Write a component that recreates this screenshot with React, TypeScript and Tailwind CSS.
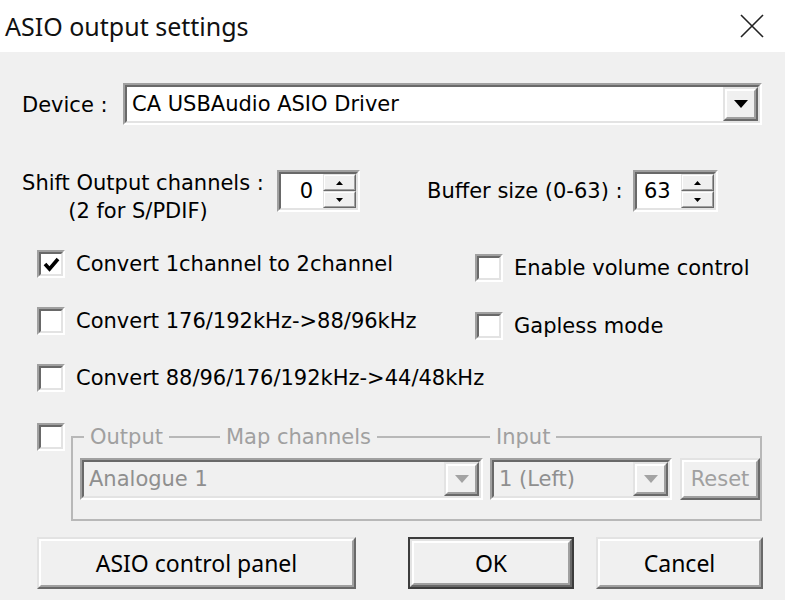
import type { ReactNode } from "react";

// classic win32 3d edges, scaled 2x
const sunkenOuter = "border-2 border-t-[#a0a0a0] border-l-[#a0a0a0] border-r-white border-b-white";
const sunkenInner = "border-2 border-t-[#696969] border-l-[#696969] border-r-[#e3e3e3] border-b-[#e3e3e3]";
const raisedOuter = "border-2 border-t-[#e3e3e3] border-l-[#e3e3e3] border-r-[#696969] border-b-[#696969]";
const raisedInner = "border-2 border-t-white border-l-white border-r-[#a0a0a0] border-b-[#a0a0a0]";

function Arrow({ disabled }: { disabled?: boolean }) {
  return (
    <svg width="14" height="8" viewBox="0 0 14 8">
      <polygon points="0,0 14,0 7,8" fill={disabled ? "#a3a3a3" : "#000"} />
    </svg>
  );
}

function DropButton({ disabled }: { disabled?: boolean }) {
  return (
    <div className={`${raisedOuter} w-[35px] h-full bg-[#f0f0f0]`}>
      <div className={`${raisedInner} h-full flex items-center justify-center`}>
        <Arrow disabled={disabled} />
      </div>
    </div>
  );
}

function Combo({ value, width, disabled }: { value: string; width: string; disabled?: boolean }) {
  return (
    <div className={`${sunkenOuter} ${width} h-[42px]`}>
      <div className={`${sunkenInner} h-full flex ${disabled ? "bg-[#f0f0f0]" : "bg-white"}`}>
        <div className={`flex-1 flex items-center pl-[5px] ${disabled ? "text-[#8f8f8f]" : "text-black"}`}>
          {value}
        </div>
        <DropButton disabled={disabled} />
      </div>
    </div>
  );
}

function SpinHalf({ up }: { up?: boolean }) {
  return (
    <div className="flex-1 border border-t-[#e3e3e3] border-l-[#e3e3e3] border-r-[#696969] border-b-[#696969] bg-[#f0f0f0]">
      <div className="h-full border border-t-white border-l-white border-r-[#a0a0a0] border-b-[#a0a0a0] flex items-center justify-center">
        <svg width="7" height="4" viewBox="0 0 7 4">
          <polygon points={up ? "0,4 7,4 3.5,0" : "0,0 7,0 3.5,4"} fill="#000" />
        </svg>
      </div>
    </div>
  );
}

function Spin({ value, width }: { value: string; width: string }) {
  return (
    <div className={`${sunkenOuter} ${width} h-[42px]`}>
      <div className={`${sunkenInner} h-full flex bg-white`}>
        <div className="flex-1 flex items-center justify-end pr-[10px]">{value}</div>
        <div className="w-[33px] flex flex-col">
          <SpinHalf up />
          <SpinHalf />
        </div>
      </div>
    </div>
  );
}

function CheckBox({ checked }: { checked?: boolean }) {
  return (
    <div className={`${sunkenOuter} w-[28px] h-[28px] shrink-0`}>
      <div className={`${sunkenInner} h-full bg-white flex items-center justify-center`}>
        {checked && (
          <svg width="17" height="15" viewBox="0 0 17 15">
            <polyline points="2,7 6.5,12 15,2" fill="none" stroke="#000" strokeWidth="3.6" />
          </svg>
        )}
      </div>
    </div>
  );
}

function Check({ label, checked }: { label: string; checked?: boolean }) {
  return (
    <div className="flex items-center gap-[11px] h-[28px]">
      <CheckBox checked={checked} />
      <span className="whitespace-nowrap">{label}</span>
    </div>
  );
}

function Button({ children, width, isDefault, disabled, height }: {
  children: ReactNode;
  width: string;
  height: string;
  isDefault?: boolean;
  disabled?: boolean;
}) {
  return (
    <div className={`${width} ${height} ${isDefault ? "border-2 border-[#3c3c3c]" : ""}`}>
      <div className={`${raisedOuter} h-full bg-[#f0f0f0]`}>
        <div className={`${raisedInner} h-full flex items-center justify-center ${disabled ? "text-[#a0a0a0]" : "text-black"}`}>
          {children}
        </div>
      </div>
    </div>
  );
}

export default function App() {
  return (
    <div className="w-[785px] h-[600px] overflow-hidden bg-[#f0f0f0] text-black text-[21px] leading-none font-['DejaVu_Sans',sans-serif]">
      <div className="h-[52px] bg-white flex items-center justify-between pl-[5px] pr-[21px] font-['Noto_Sans',sans-serif]">
        <span className="text-[25px] text-[#111]">ASIO output settings</span>
        <svg width="24" height="24" viewBox="0 0 24 24">
          <path d="M1 1 L23 23 M23 1 L1 23" stroke="#222" strokeWidth="1.6" />
        </svg>
      </div>

      <div className="mt-[31px] flex items-center justify-between pl-[22px] pr-[23px]">
        <span className="mt-[3px]">Device :</span>
        <Combo value="CA USBAudio ASIO Driver" width="w-[639px]" />
      </div>

      <div className="mt-[44px] flex items-start pl-[18px]">
        <div className="w-[250px] text-center leading-[28px]">
          <div>Shift Output channels :</div>
          <div className="pr-[10px]">(2 for S/PDIF)</div>
        </div>
        <div className="ml-[9px] mt-[1px]">
          <Spin value="0" width="w-[83px]" />
        </div>
        <div className="ml-[67px] mt-[1px] h-[42px] flex items-center gap-[10px]">
          <span>Buffer size (0-63) :</span>
          <Spin value="63" width="w-[85px]" />
        </div>
      </div>

      <div className="mt-[25px] flex pl-[37px]">
        <div className="w-[438px] flex flex-col gap-[29px]">
          <Check label="Convert 1channel to 2channel" checked />
          <Check label="Convert 176/192kHz->88/96kHz" />
          <Check label="Convert 88/96/176/192kHz->44/48kHz" />
        </div>
        <div className="mt-[4px] flex flex-col gap-[30px]">
          <Check label="Enable volume control" />
          <Check label="Gapless mode" />
        </div>
      </div>

      <div className="mt-[31px] flex items-start pl-[37px]">
        <CheckBox />
        <div className="relative ml-[6px] mt-[13px] w-[691px] h-[85px] border-2 border-[#b8b8b8]">
          <span className="absolute top-[-13px] left-[11px] px-[6px] bg-[#f0f0f0] text-[#a0a0a0] leading-[24px]">Output</span>
          <span className="absolute top-[-13px] left-[147px] px-[6px] bg-[#f0f0f0] text-[#a0a0a0] leading-[24px]">Map channels</span>
          <span className="absolute top-[-13px] left-[417px] px-[6px] bg-[#f0f0f0] text-[#a0a0a0] leading-[24px]">Input</span>
          <div className="pt-[20px] pl-[7px] flex gap-[7px]">
            <Combo value="Analogue 1" width="w-[403px]" disabled />
            <Combo value="1 (Left)" width="w-[182px]" disabled />
            <div className="ml-[1px]">
              <Button width="w-[80px]" height="h-[42px]" disabled>Reset</Button>
            </div>
          </div>
        </div>
      </div>

      <div className="mt-[16px] flex pl-[37px] font-['Noto_Sans',sans-serif] text-[23px]">
        <Button width="w-[319px]" height="h-[52px]">ASIO control panel</Button>
        <div className="ml-[52px]">
          <Button width="w-[166px]" height="h-[52px]" isDefault>OK</Button>
        </div>
        <div className="ml-[22px]">
          <Button width="w-[167px]" height="h-[52px]">Cancel</Button>
        </div>
      </div>
    </div>
  );
}
